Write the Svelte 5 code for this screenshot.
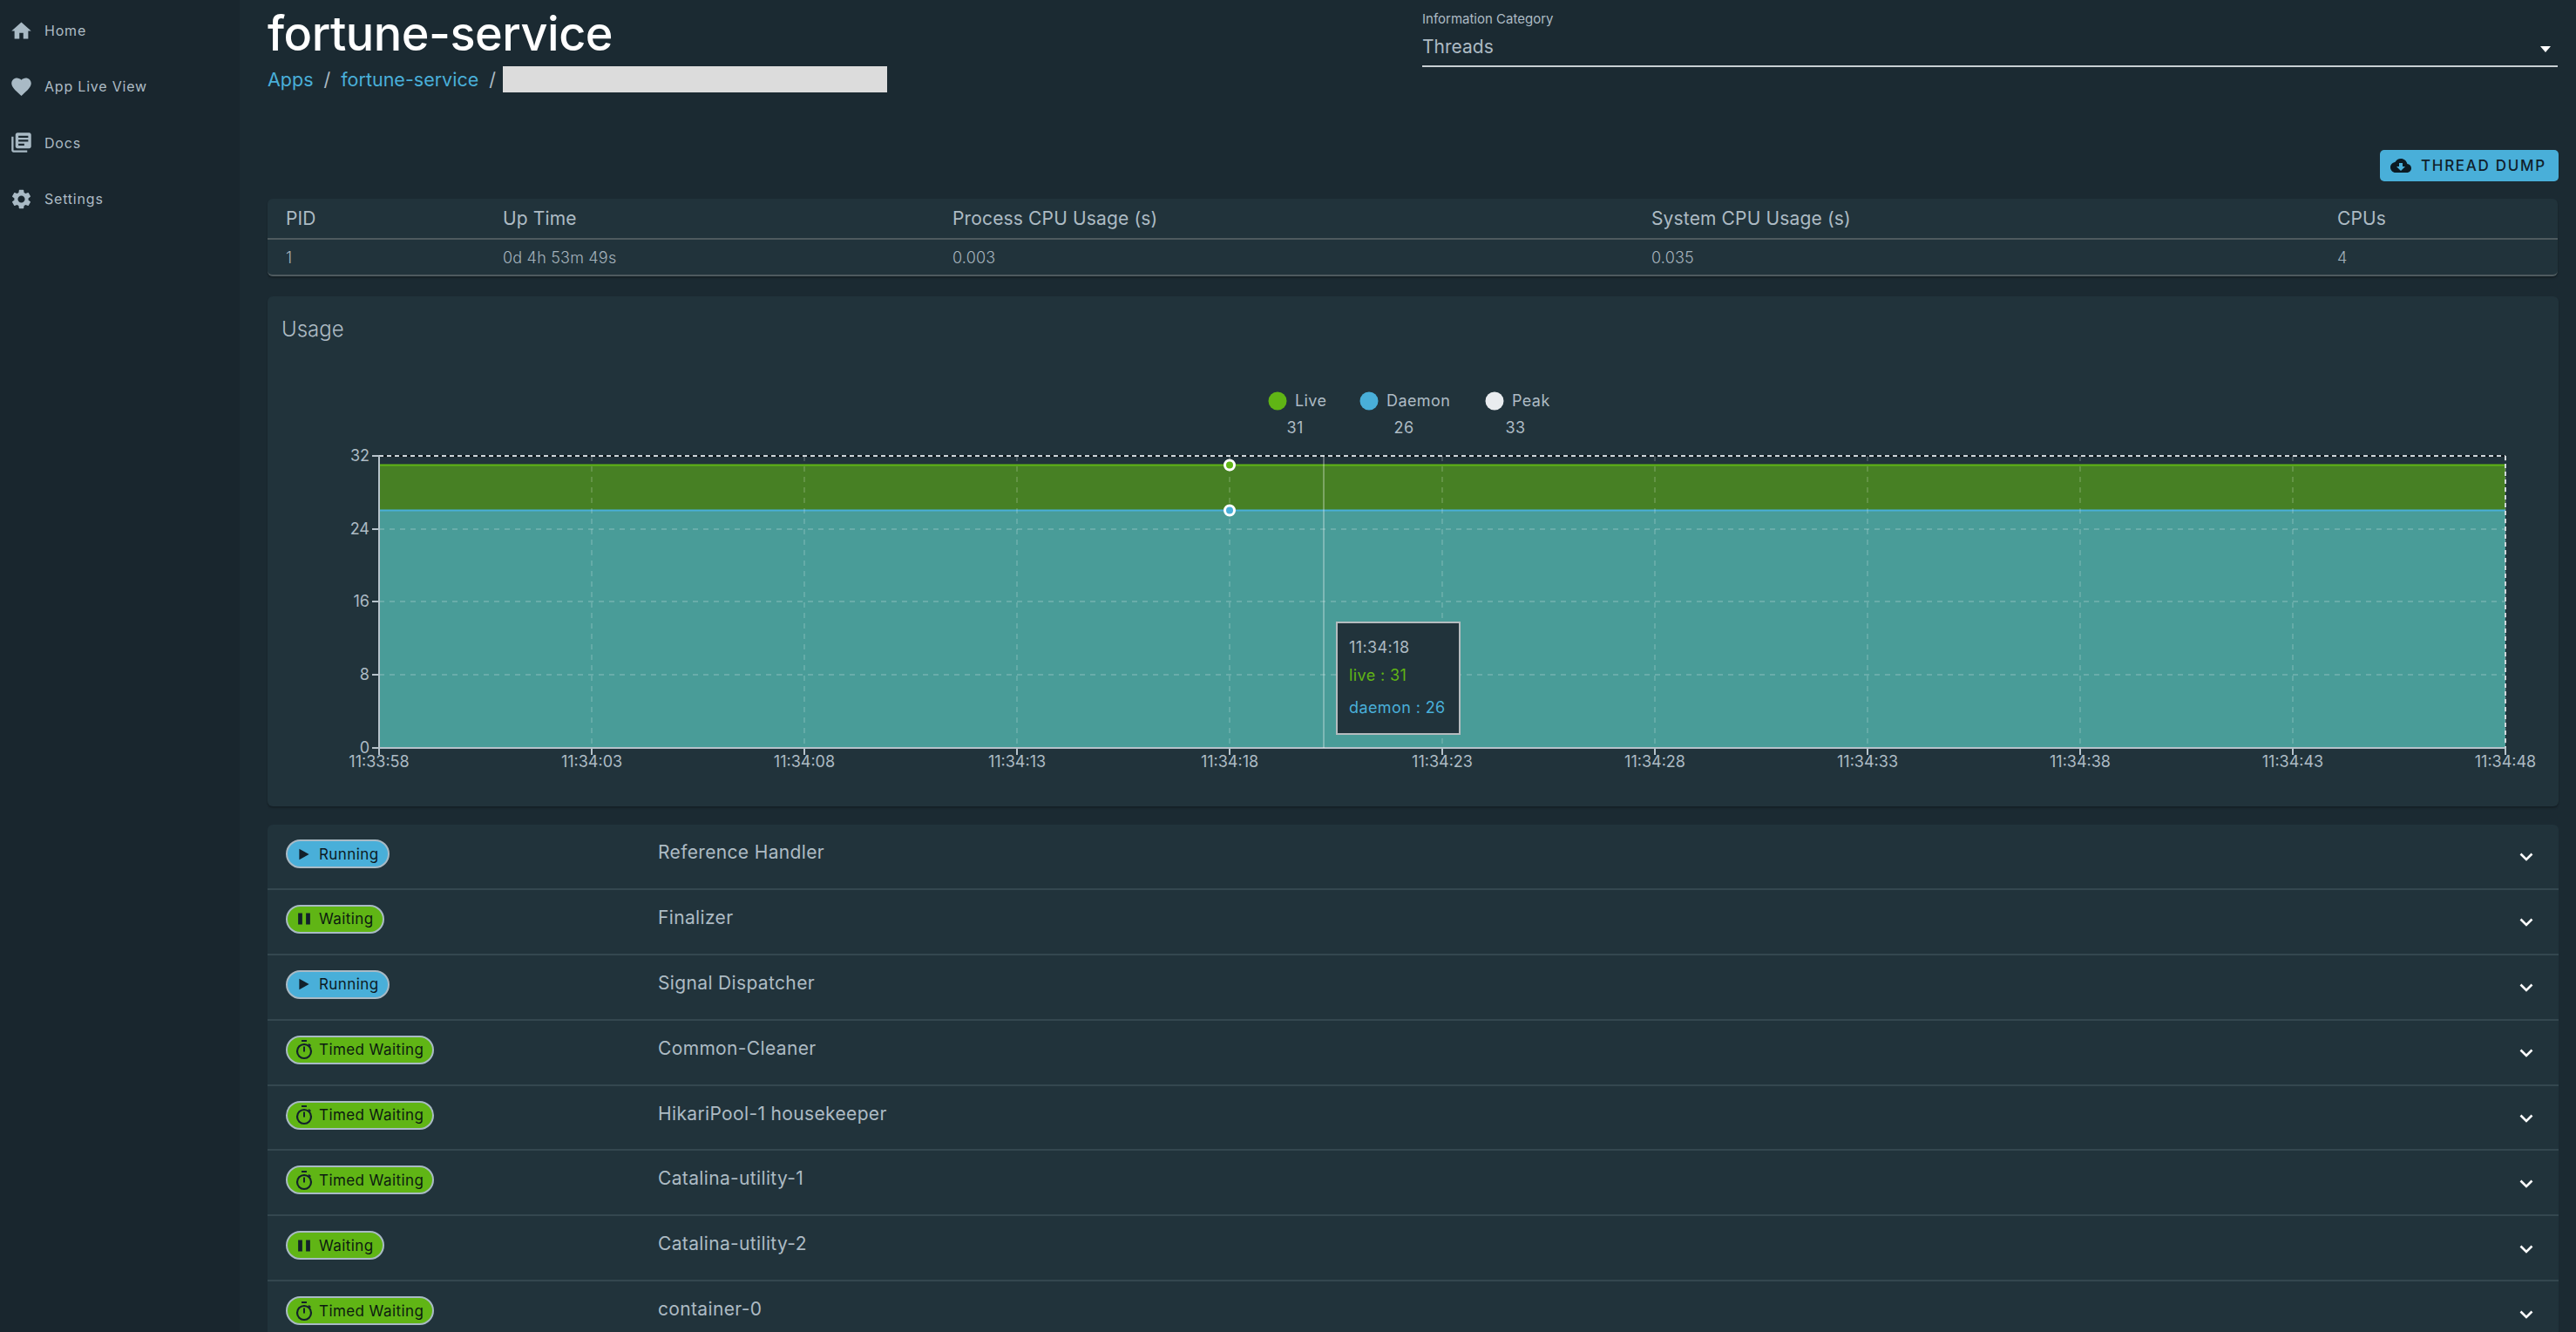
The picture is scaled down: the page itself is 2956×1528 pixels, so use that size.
<script>
  const nav = [
    { label: 'Home', d: 'M10 20v-6h4v6h5v-8h3L12 3 2 12h3v8z' },
    { label: 'App Live View', d: 'M12 21.35l-1.45-1.32C5.4 15.36 2 12.28 2 8.5 2 5.42 4.42 3 7.5 3c1.74 0 3.41.81 4.5 2.09C13.09 3.81 14.76 3 16.5 3 19.58 3 22 5.42 22 8.5c0 3.78-3.4 6.86-8.55 11.54L12 21.35z' },
    { label: 'Docs', d: 'M4 6H2v14c0 1.1.9 2 2 2h14v-2H4V6zm16-4H8c-1.1 0-2 .9-2 2v12c0 1.1.9 2 2 2h12c1.1 0 2-.9 2-2V4c0-1.1-.9-2-2-2zm-1 9H9V9h10v2zm-4 4H9v-2h6v2zm4-8H9V5h10v2z' },
    { label: 'Settings', d: 'M19.14 12.94c.04-.3.06-.61.06-.94 0-.32-.02-.64-.07-.94l2.03-1.58c.18-.14.23-.41.12-.61l-1.92-3.32c-.12-.22-.37-.29-.59-.22l-2.39.96c-.5-.38-1.03-.7-1.62-.94l-.36-2.54c-.04-.24-.24-.41-.48-.41h-3.84c-.24 0-.43.17-.47.41l-.36 2.54c-.59.24-1.13.57-1.62.94l-2.39-.96c-.22-.08-.47 0-.59.22L2.74 8.87c-.12.21-.08.47.12.61l2.03 1.58c-.05.3-.09.63-.09.94s.02.64.07.94l-2.03 1.58c-.18.14-.23.41-.12.61l1.92 3.32c.12.22.37.29.59.22l2.39-.96c.5.38 1.03.7 1.62.94l.36 2.54c.05.24.24.41.48.41h3.84c.24 0 .44-.17.47-.41l.36-2.54c.59-.24 1.13-.56 1.62-.94l2.39.96c.22.08.47 0 .59-.22l1.92-3.32c.12-.22.07-.47-.12-.61l-2.01-1.58zM12 15.6c-1.98 0-3.6-1.62-3.6-3.6s1.62-3.6 3.6-3.6 3.6 1.62 3.6 3.6-1.62 3.6-3.6 3.6z' }
  ];
  const threads = [
    ['Running', 'Reference Handler'],
    ['Waiting', 'Finalizer'],
    ['Running', 'Signal Dispatcher'],
    ['Timed Waiting', 'Common-Cleaner'],
    ['Timed Waiting', 'HikariPool-1 housekeeper'],
    ['Timed Waiting', 'Catalina-utility-1'],
    ['Waiting', 'Catalina-utility-2'],
    ['Timed Waiting', 'container-0']
  ];
  const xLabels = ['11:33:58','11:34:03','11:34:08','11:34:13','11:34:18','11:34:23','11:34:28','11:34:33','11:34:38','11:34:43','11:34:48'];
  const ticks = xLabels.map((t, i) => ({ t, x: 435 + i * 244 }));
  const yTicks = [[32, 523], [24, 607], [16, 690], [8, 774], [0, 858]];
  const legend = [
    { name: 'Live', color: '#60b515', cx: 1466, tx: 1486, vx: 1486, v: 31 },
    { name: 'Daemon', color: '#49afd9', cx: 1571, tx: 1591, vx: 1611, v: 26 },
    { name: 'Peak', color: '#e9ecef', cx: 1715, tx: 1735, vx: 1739, v: 33 }
  ];
</script>

<div class="page">
  <aside class="side">
    {#each nav as n}
      <div class="nav">
        <svg class="navicon" viewBox="0 0 24 24"><path d={n.d} /></svg>
        <span>{n.label}</span>
      </div>
    {/each}
  </aside>
  <main class="main">
    <header class="head">
      <div class="titles">
        <h1>fortune-service</h1>
        <div class="crumbs">
          <a href="#a">Apps</a><span class="sl">/</span><a href="#b">fortune-service</a><span class="sl">/</span><span class="redact"></span>
        </div>
      </div>
      <div class="select">
        <label for="cat">Information Category</label>
        <div id="cat" class="selval"><span>Threads</span><i class="caret"></i></div>
      </div>
    </header>
    <div class="actions">
      <button class="dump">
        <svg viewBox="0 0 24 24"><path fill-rule="evenodd" d="M19.35 10.04C18.67 6.59 15.64 4 12 4 9.11 4 6.6 5.64 5.35 8.04 2.34 8.36 0 10.91 0 14c0 3.31 2.69 6 6 6h13c2.76 0 5-2.24 5-5 0-2.64-2.05-4.78-4.65-4.96zM17 13l-5 5-5-5h3V9h4v4h3z" /></svg>
        THREAD DUMP
      </button>
    </div>
    <section class="stats">
      <div class="grow head-row">
        <span>PID</span><span>Up Time</span><span>Process CPU Usage (s)</span><span>System CPU Usage (s)</span><span>CPUs</span>
      </div>
      <div class="grow val-row">
        <span>1</span><span>0d 4h 53m 49s</span><span>0.003</span><span>0.035</span><span>4</span>
      </div>
    </section>
    <section class="usage">
      <h2>Usage</h2>
      <div class="chart">
        <svg class="plot" viewBox="307 410 2629 515">
          {#each legend as l}
            <circle cx={l.cx} cy="460" r="10.5" fill={l.color} />
            <text x={l.tx} y="466" class="lg">{l.name}</text>
            <text x={l.vx} y="497" class="lg" text-anchor="middle">{l.v}</text>
          {/each}
          <line x1="435" x2="2875" y1="523" y2="523" stroke="#10191f" stroke-width="2" />
          <rect x="435" y="533" width="2440" height="52" fill="#478024" />
          <rect x="435" y="585" width="2440" height="273" fill="#499c98" />
          <line x1="435" x2="2875" y1="533.5" y2="533.5" stroke="#60b515" stroke-width="2" />
          <line x1="435" x2="2875" y1="585.5" y2="585.5" stroke="#49afd9" stroke-width="2" />
          {#each ticks as t, i}
            {#if i > 0}
              <line x1={t.x} x2={t.x} y1="523" y2="858" class="grid" />
            {/if}
            <line x1={t.x} x2={t.x} y1="858" y2="866" class="axis" />
            <text x={t.x} y="880" class="tick" text-anchor="middle">{t.t}</text>
          {/each}
          {#each yTicks as y}
            <line x1="427" x2="435" y1={y[1]} y2={y[1]} class="axis" />
            <text x="424" y={y[1] + 6} class="tick" text-anchor="end">{y[0]}</text>
            {#if y[0] > 0 && y[0] < 32}
              <line x1="435" x2="2875" y1={y[1]} y2={y[1]} class="grid" />
            {/if}
          {/each}
          <line x1="435" x2="2875" y1="523" y2="523" class="topdash" />
          <line x1="2875" x2="2875" y1="523" y2="858" class="topdash" />
          <line x1="435" x2="435" y1="523" y2="858" class="axis" />
          <line x1="435" x2="2875" y1="858" y2="858" class="axis" />
          <line x1="1519" x2="1519" y1="523" y2="858" stroke="#fff" stroke-opacity="0.4" stroke-width="1.5" />
          <circle cx="1411" cy="533.5" r="5.5" fill="#60b515" stroke="#fff" stroke-width="3" />
          <circle cx="1411" cy="585.5" r="5.5" fill="#49afd9" stroke="#fff" stroke-width="3" />
        </svg>
        <div class="tip">
          <div class="tt">11:34:18</div>
          <div class="tl">live : 31</div>
          <div class="td">daemon : 26</div>
        </div>
      </div>
    </section>
    <section class="list">
      {#each threads as t}
        <div class="row">
          <div class="cell-badge">
            <span class="badge" class:run={t[0] === 'Running'}>
              {#if t[0] === 'Running'}
                <svg viewBox="0 0 16 18"><path d="M3.500 4l9 5-9 5z" /></svg>
              {:else if t[0] === 'Waiting'}
                <svg viewBox="0 0 16 18"><path d="M2.500 3.800h3.800v10.400H2.500zM9.700 3.800h3.800v10.400H9.700z" /></svg>
              {:else}
                <svg viewBox="0 0 20 24"><path d="M7 1h6v2H7z" /><circle cx="10" cy="14" r="8" fill="none" stroke="#12212b" stroke-width="2.2" /><path d="M9 8.500h2v6H9z" /><path d="M15.500 5l2.500 2-1 1.200-2.500-2z" /></svg>
              {/if}
              {t[0]}
            </span>
          </div>
          <span class="tname">{t[1]}</span>
          <svg class="chev" viewBox="0 0 16 12"><path d="M1.500 2.500L8 9l6.500-6.500" fill="none" stroke="#fff" stroke-width="2.6" /></svg>
        </div>
      {/each}
    </section>
  </main>
</div>

<style>
  :global(body) { margin: 0; background: #1b2a32; }
  .page {
    display: flex; width: 2956px; height: 1528px; overflow: hidden;
    font-family: Inter, "Noto Sans", sans-serif; color: #adbbc4; font-weight: 400;
  }
  .side { width: 275px; flex: none; background: #19262e; padding-top: 3px; box-sizing: border-box; }
  .nav { display: flex; align-items: center; height: 64.300px; padding-left: 11px; gap: 13px; font-size: 16px; letter-spacing: .8px; }
  .navicon { width: 27px; height: 27px; fill: #a9bac5; flex: none; }
  .main { flex: 1; padding: 0 21px 0 32px; min-width: 0; }
  .head { display: flex; justify-content: space-between; height: 172px; }
  h1 { margin: 0; font-size: 54px; font-weight: 500; color: #fff; line-height: 78px; letter-spacing: -0.5px; }
  .crumbs { display: flex; align-items: center; height: 30px; font-size: 21.500px; margin-top: -2px; }
  .crumbs a { color: #49afd9; text-decoration: none; }
  .sl { margin: 0 12px; }
  .redact { width: 441px; height: 30px; background: #dcdcdc; margin-left: -4px; }
  .select { width: 1303px; padding-top: 12px; box-sizing: border-box; }
  .select label { display: block; font-size: 15px; line-height: 20px; }
  .selval {
    display: flex; justify-content: space-between; align-items: center; height: 43px;
    border-bottom: 2px solid #c8cfd3; font-size: 21px;
  }
  .caret { width: 0; height: 0; border: 6px solid transparent; border-top: 7px solid #fff; border-bottom: 0; margin-right: 8px; margin-top: 6px; }
  .actions { display: flex; justify-content: flex-end; height: 56px; margin-right: -1px; }
  .dump {
    width: 205px; height: 36px; border: 0; border-radius: 5px; background: #49afd9; color: #10202a;
    display: flex; align-items: center; gap: 11px; padding: 0 0 0 12px; box-sizing: border-box;
    font: 500 17px Inter, sans-serif; letter-spacing: 1.7px;
  }
  .dump svg { width: 24px; height: 24px; fill: #0c1a22; flex: none; }
  .stats { background: #21333b; border-radius: 6px; height: 89px; font-size: 21px; box-shadow: 0 2px 2px rgba(0,0,0,.25); }
  .grow { display: grid; grid-template-columns: 249px 516px 802px 787px 1fr; padding-left: 21px; box-sizing: border-box; }
  .head-row { height: 47px; align-items: center; border-bottom: 2px solid #4e5a5e; letter-spacing: .15px; }
  .val-row { height: 42px; align-items: center; font-size: 18px; font-weight: 300; letter-spacing: .2px; border-bottom: 2px solid #4e5a5e; color: #a4b2bb; border-radius: 0 0 6px 6px; }
  .usage { background: #21333b; border-radius: 6px; margin-top: 23px; margin-right: -1px; height: 585px; box-shadow: 0 2px 2px rgba(0,0,0,.25); }
  h2 { margin: 0; font-size: 24px; font-weight: 300; height: 70px; padding: 23px 0 0 16px; box-sizing: border-box; line-height: 30px; }
  .chart { position: relative; height: 515px; }
  .plot { display: block; width: 2629px; height: 515px; }
  .lg { font-size: 18px; fill: #adbbc4; font-family: Inter, sans-serif; letter-spacing: .4px; }
  .tick { font-size: 18px; fill: #adbbc4; font-family: Inter, sans-serif; }
  .grid { stroke: #fff; stroke-opacity: .24; stroke-width: 1.300; stroke-dasharray: 6 6; }
  .axis { stroke: #b6c2ca; stroke-width: 2; }
  .topdash { stroke: #cfd6da; stroke-width: 2; stroke-dasharray: 5 4; }
  .tip {
    position: absolute; left: 1226px; top: 303px; width: 143px; height: 130px; box-sizing: border-box;
    background: #21333b; border: 2px solid #b5bcbf; font-size: 18px; padding: 12px 13px; letter-spacing: .4px;
  }
  .tt { line-height: 32px; }
  .tl { color: #60b515; line-height: 32px; }
  .td { color: #49afd9; line-height: 32px; margin-top: 5px; }
  .list { background: #21333b; border-radius: 6px 6px 0 0; margin-top: 21px; margin-right: -1px; }
  .row { height: 74.900px; display: flex; align-items: center; border-bottom: 2px solid #34474f; box-sizing: border-box; padding: 0 29px 0 21px; position: relative; }
  .cell-badge { width: 427px; flex: none; align-self: flex-start; padding-top: 17px; }
  .badge {
    display: inline-flex; align-items: center; gap: 7px; height: 33px; box-sizing: border-box; padding: 0 10px 0 9px;
    background: #60b515; border: 2px solid #a9bac5; border-radius: 17px; color: #0c1a10; font-size: 17px; letter-spacing: .42px; white-space: nowrap;
  }
  .badge.run { background: #49afd9; color: #0c1a22; }
  .badge svg { width: 20px; height: 24px; fill: #12212b; flex: none; }
  .tname { flex: 1; font-size: 21px; letter-spacing: .35px; margin-top: -10px; }
  .chev { width: 16px; height: 12px; flex: none; margin-top: 2px; }
</style>
